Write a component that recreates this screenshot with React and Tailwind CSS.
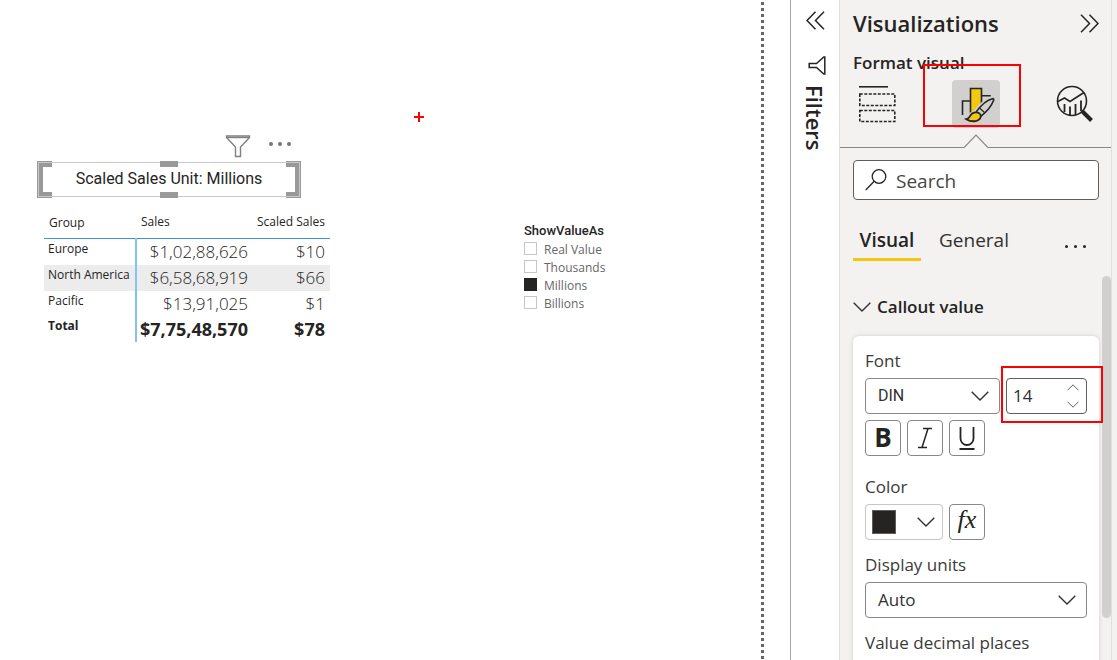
import React, { useState } from "react";

const UI = "font-['Open_Sans','Noto_Sans',sans-serif]";
const DIN = "font-['Roboto','Noto_Sans',sans-serif]";

const rows = [
  { group: "Europe", sales: "$1,02,88,626", scaled: "$10" },
  { group: "North America", sales: "$6,58,68,919", scaled: "$66" },
  { group: "Pacific", sales: "$13,91,025", scaled: "$1" },
];

const units = ["Real Value", "Thousands", "Millions", "Billions"];

function Chevron({ className = "" }) {
  return (
    <svg className={className} width="18" height="10" viewBox="0 0 18 10" fill="none" stroke="#323130" strokeWidth="1.4" aria-hidden="true">
      <path d="M.7.8 9 9 17.300.8" />
    </svg>
  );
}

function DoubleChevron({ flip }) {
  return (
    <svg className={flip ? "rotate-180" : ""} width="19" height="19" viewBox="0 0 19 19" fill="none" stroke="#252423" strokeWidth="1.500" aria-hidden="true">
      <path d="M1 .8 9.500 9.500 1 18.200M9.500.8 18 9.500 9.500 18.200" />
    </svg>
  );
}

function Handle({ className }) {
  return <span className={"absolute border-[#999999] " + className} />;
}

function CardVisual() {
  return (
    <section className="absolute left-[37px] top-[132px] w-[264px]">
      <div className="flex h-[29px] items-center justify-end gap-[18px] pb-[2px] pr-[10px]">
        <button aria-label="Filters applied">
          <svg width="26" height="24" viewBox="0 0 26 24" fill="none" stroke="#808080" strokeWidth="1.4">
            <path d="M1.500 3.500v-1.500h23v1.500L15.500 13v9.500h-5V13Z" />
            <path d="M1.500 3.500h23" />
          </svg>
        </button>
        <button aria-label="More options" className="flex items-center gap-[5px] pb-1">
          <span className="size-1 rounded-full bg-[#777777]" />
          <span className="size-1 rounded-full bg-[#777777]" />
          <span className="size-1 rounded-full bg-[#777777]" />
        </button>
      </div>
      <div className="relative flex h-[37px] items-center justify-center">
        <Handle className="left-0 top-0 h-full w-[15px] border-y-[6px] border-l-[6px]" />
        <Handle className="right-0 top-0 h-full w-[15px] border-y-[6px] border-r-[6px]" />
        <span className="absolute inset-px border border-[#c8c8c8]" />
        <Handle className="left-[123px] top-0 h-[6px] w-[18px] bg-[#999999]" />
        <Handle className="bottom-0 left-[123px] h-[6px] w-[18px] bg-[#999999]" />
        <p className={"relative pb-px text-[16px] text-[#252423] " + DIN}>Scaled Sales Unit: Millions</p>
      </div>
    </section>
  );
}

function SalesTable() {
  return (
    <table className="absolute left-[44px] top-[209px] w-[286px] border-collapse text-[#252423]">
      <thead>
        <tr className="h-[29px] border-b border-[#3a96dd] text-[12px] leading-4">
          <th className="w-[92px] pl-[5px] text-left font-normal">Group</th>
          <th className="pb-[2px] pl-[5px] text-left font-normal">Sales</th>
          <th className="w-[78px] whitespace-nowrap pb-[2px] pr-[5px] text-right font-normal">Scaled Sales</th>
        </tr>
      </thead>
      <tbody>
        {rows.map((r, i) => (
          <tr key={r.group} className={i === 1 ? "bg-[#ececec]" : ""}>
            <th scope="row" className="whitespace-nowrap border-r-2 border-[#83c1f5] pl-1 pt-[2px] text-left align-top text-[12px] font-normal leading-4">{r.group}</th>
            <td className="pr-1 text-right text-[17px] font-[360] leading-[26px]">{r.sales}</td>
            <td className="pr-[5px] text-right text-[17px] font-[360] leading-[26px]">{r.scaled}</td>
          </tr>
        ))}
        <tr className="font-bold">
          <th scope="row" className="border-r-2 border-[#83c1f5] pl-1 pt-px text-left align-top text-[12px] leading-4">Total</th>
          <td className="pr-1 text-right text-[18px] leading-[25px]">$7,75,48,570</td>
          <td className="pr-[5px] text-right text-[18px] leading-[25px]">$78</td>
        </tr>
      </tbody>
    </table>
  );
}

function Slicer() {
  const [picked, setPicked] = useState("Millions");
  return (
    <fieldset className="absolute left-[524px] top-[222px]">
      <legend className={"pb-px text-[13px] font-medium leading-[18px] text-[#252423] " + DIN}>ShowValueAs</legend>
      {units.map((u) => (
        <label key={u} className="flex h-[18px] items-center gap-[7px] text-[12px] text-[#666666]">
          <input
            type="checkbox"
            checked={picked === u}
            onChange={() => setPicked(u)}
            className="mb-[3px] size-[13px] appearance-none border border-[#c8c6c4] bg-white checked:border-[#252423] checked:bg-[#252423]"
          />
          {u}
        </label>
      ))}
    </fieldset>
  );
}

function Canvas() {
  return (
    <main className="relative min-w-0 flex-1 overflow-hidden border-r border-[#a6a6a6] bg-white">
      <div className="absolute inset-y-0 right-[26px] top-[2px] w-[3px] bg-[repeating-linear-gradient(to_bottom,#666666_0px,#666666_3px,transparent_3px,transparent_6px)]" />
      <svg className="absolute left-[414px] top-[112px]" width="10" height="10" viewBox="0 0 10 10" stroke="#ff0000" strokeWidth="2" aria-hidden="true">
        <path d="M5 0v10M0 5h10" />
      </svg>
      <CardVisual />
      <SalesTable />
      <Slicer />
    </main>
  );
}

function FiltersRail() {
  return (
    <aside className="flex w-12 shrink-0 flex-col items-center bg-white pt-[11px]">
      <button aria-label="Expand filters"><DoubleChevron flip /></button>
      <svg className="ml-1 mt-[26px]" width="18" height="19" viewBox="0 0 18 19" fill="none" stroke="#252423" strokeWidth="1.500" aria-hidden="true">
        <path d="M16.800 1v17h-1L8.500 11.500H1.200v-4h7.300L15.800 1Z" />
      </svg>
      <h2 className="mt-[10px] text-[22px] font-semibold leading-6 text-[#252423] [writing-mode:vertical-rl]">Filters</h2>
    </aside>
  );
}

function ModeTabs() {
  return (
    <div className="relative flex h-[68px] items-start justify-between border-b border-[#8a8886] pl-[18px] pr-[18px]">
      <button aria-label="Build visual" className="mt-[5px]">
        <svg width="38" height="38" viewBox="0 0 38 38" fill="none" stroke="#252423" strokeWidth="1.600">
          <path d="M1 1.800h29" />
          <path d="M1.800 9h35v11.500h-35ZM1.800 25.500h35v11h-35Z" strokeDasharray="3 1.500" />
        </svg>
      </button>
      <button aria-label="Format visual" className="relative size-12 rounded-sm bg-[#d2d0ce]">
        <svg width="48" height="48" viewBox="0 0 48 48" fill="none" stroke="#252423" strokeWidth="1.600">
          <path d="M10.500 35V21h8M29.500 15.700h9.200" />
          <path d="M18.500 35V8.500h11v20L23 33Z" fill="#f2c811" stroke="none" />
          <path d="M18.500 35V8.500h11V27" />
          <path d="M22.800 33C27.500 26.500 34.500 20.500 41.500 19.300 40 26 34.500 32.500 28.600 36.500M14.500 39c3-.5 3.200-5.500 8.300-6" stroke="#d2d0ce" strokeWidth="4.500" />
          <path d="M23.800 32.400C28 26.500 34.500 20 40.600 18.700c1.200-.2 1.300.8.9 1.900C39.500 26 34.500 32 28.800 36.300Z" fill="#d2d0ce" />
          <path d="M27.800 28.300 32.500 32.500" strokeWidth="1.200" />
          <path d="M23.800 32.400c2.800-.2 5.200 1.500 5 3.900-.8 5.200-8.500 6.500-14.500 2.900 2.700-.6 3-1.700 4-3.600 1-1.900 3-3.100 5.500-3.200Z" fill="#f2c811" strokeWidth="1.800" />
        </svg>
        <span className="pointer-events-none absolute left-[-29px] top-[-16px] h-[63px] w-[98px] border-2 border-[#ff0000]" />
      </button>
      <button aria-label="Analytics" className="mt-[5px]">
        <svg width="37" height="38" viewBox="0 0 37 38" fill="none" stroke="#252423" strokeWidth="1.600">
          <circle cx="16" cy="16" r="14.500" />
          <path d="m2 16.500 6.500-3.500 5.500 3.500L28 7.500" />
          <path d="M8.500 19v8M14 21.500V30M19.500 19v11M25 15.500V26" strokeWidth="1.800" />
          <path d="m26 26 9.500 9.500" strokeWidth="4" />
        </svg>
      </button>
      <svg className="absolute bottom-[-1px] left-[124px]" width="24" height="14" viewBox="0 0 24 14" aria-hidden="true">
        <path d="M0 14 12 1.200 24 14Z" fill="#f3f2f1" />
        <path d="M0 13.500 12 1.200 24 13.500" fill="none" stroke="#8a8886" strokeWidth="1.200" />
      </svg>
    </div>
  );
}

const iconButton = "flex size-9 items-center justify-center rounded-sm border border-[#8a8886] bg-white";

function CalloutCard() {
  return (
    <div className="mt-[14px] rounded-t-md bg-white px-3 pb-6 pt-[10px] text-[17px] leading-[30px] text-[#3b3a39] shadow-[0_0_4px_rgba(0,0,0,0.15)]">
      <label htmlFor="font" className="block pb-[2px]">Font</label>
      <div className="flex gap-[6px]">
        <div className="relative min-w-0 flex-1">
          <select id="font" className={"block h-9 w-full appearance-none rounded-sm border border-[#8a8886] bg-white px-3 text-[16px] text-[#323130] " + DIN}>
            <option>DIN</option>
          </select>
          <Chevron className="pointer-events-none absolute right-[11px] top-[13px]" />
        </div>
        <div className="relative flex h-9 w-[81px] items-center rounded-sm border border-[#605e5c] bg-white">
          <input aria-label="Font size" defaultValue="14" className="w-full min-w-0 flex-1 bg-transparent pl-[6px] text-[17px] text-[#323130] outline-none" />
          <div className="flex w-[26px] flex-col items-center gap-[10px]">
            <button aria-label="Increase">
              <svg className="block" width="12" height="7" viewBox="0 0 12 7" fill="none" stroke="#605e5c"><path d="M.5 6.300 6 .8l5.500 5.500" /></svg>
            </button>
            <button aria-label="Decrease">
              <svg className="block" width="12" height="7" viewBox="0 0 12 7" fill="none" stroke="#605e5c"><path d="M.5.7 6 6.200 11.500.7" /></svg>
            </button>
          </div>
          <span className="pointer-events-none absolute left-[-6px] top-[-13px] h-[57px] w-[102px] border-2 border-[#ff0000]" />
        </div>
      </div>
      <div className="mt-[6px] flex gap-[6px] text-[#252423]">
        <button aria-label="Bold" className={iconButton + " pb-[2px] text-[26px] font-bold"}>B</button>
        <button aria-label="Italic" className={iconButton}>
          <svg width="16" height="22" viewBox="0 0 16 22" fill="none" stroke="#252423" strokeWidth="1.500"><path d="M6 1.500h9M1 20.500h9M11 1.500 5 20.500" /></svg>
        </button>
        <button aria-label="Underline" className={iconButton}>
          <svg width="18" height="24" viewBox="0 0 18 24" fill="none" stroke="#252423" strokeWidth="1.800"><path d="M2.500 1v11.500a6.500 6.500 0 0 0 13 0V1M1.500 23h15" /></svg>
        </button>
      </div>
      <p className="mt-4">Color</p>
      <div className="mt-[2px] flex gap-[6px]">
        <button aria-label="Color" className="flex h-9 w-[78px] items-center justify-between rounded-sm border border-[#c8c6c4] bg-white pl-[6px] pr-[7px]">
          <span className="size-6 border border-[#605e5c] bg-[#252423]" />
          <Chevron />
        </button>
        <button aria-label="Conditional formatting" className={iconButton + " pb-1 font-['Liberation_Serif',serif] text-[26px] italic text-[#252423]"}>fx</button>
      </div>
      <label htmlFor="units" className="mt-[10px] block">Display units</label>
      <div className="relative mt-[2px]">
        <select id="units" className="block h-9 w-full appearance-none rounded-sm border border-[#8a8886] bg-white px-3 text-[17px] text-[#323130]">
          <option>Auto</option>
        </select>
        <Chevron className="pointer-events-none absolute right-[11px] top-[13px]" />
      </div>
      <p className="mt-[10px]">Value decimal places</p>
    </div>
  );
}

function VisualizationsPane() {
  return (
    <aside className="flex w-[278px] shrink-0 border-l border-[#e1dfdd] bg-[#f3f2f1] text-[#252423]">
      <div className="flex min-w-0 flex-1 flex-col">
        <header className="flex h-12 items-center justify-between pl-[13px] pr-3">
          <h2 className="pb-[2px] text-[22px] font-semibold leading-8">Visualizations</h2>
          <button aria-label="Collapse pane" className="pb-[2px]"><DoubleChevron /></button>
        </header>
        <h3 className="h-8 pl-[13px] text-[17px] font-semibold leading-[30px]">Format visual</h3>
        <ModeTabs />
        <div className="flex min-h-0 flex-1">
          <div className="min-w-0 flex-1 pl-[13px] pr-[3px] pt-3">
            <div className="flex h-10 items-center gap-[9px] rounded-sm border border-[#605e5c] bg-white pl-[11px]">
              <svg width="22" height="22" viewBox="0 0 22 22" fill="none" stroke="#252423" strokeWidth="1.300" aria-hidden="true">
                <circle cx="14" cy="7.500" r="6.800" /><path d="M9.200 12.300.7 21" />
              </svg>
              <input type="search" aria-label="Search" placeholder="Search" className="min-w-0 flex-1 bg-transparent pt-[2px] text-[19px] outline-none placeholder:text-[#484644]" />
            </div>
            <nav className="mt-5 flex h-[41px] items-stretch text-[19px]">
              <button className="w-[68px] border-b-[3px] border-[#f2c811] pt-[2px] font-semibold">Visual</button>
              <button className="ml-[18px] border-b-[3px] border-transparent pt-[2px] text-[#323130]">General</button>
              <button aria-label="More" className="ml-auto mr-[13px] mt-3 flex items-center gap-[6px]">
                <span className="size-[3px] rounded-full bg-[#252423]" />
                <span className="size-[3px] rounded-full bg-[#252423]" />
                <span className="size-[3px] rounded-full bg-[#252423]" />
              </button>
            </nav>
            <button className="mt-[31px] flex h-[30px] items-center gap-[6px] text-[17px] font-semibold">
              <Chevron />
              Callout value
            </button>
            <CalloutCard />
          </div>
          <div className="w-[9px] shrink-0 pt-32">
            <div className="h-[342px] rounded-full bg-[#d2d0ce]" />
          </div>
        </div>
      </div>
      <div className="w-[6px] shrink-0 border-l border-[#e1dfdd]" />
    </aside>
  );
}

export default function App() {
  return (
    <div className={"flex h-screen overflow-hidden bg-white " + UI}>
      <Canvas />
      <FiltersRail />
      <VisualizationsPane />
    </div>
  );
}
